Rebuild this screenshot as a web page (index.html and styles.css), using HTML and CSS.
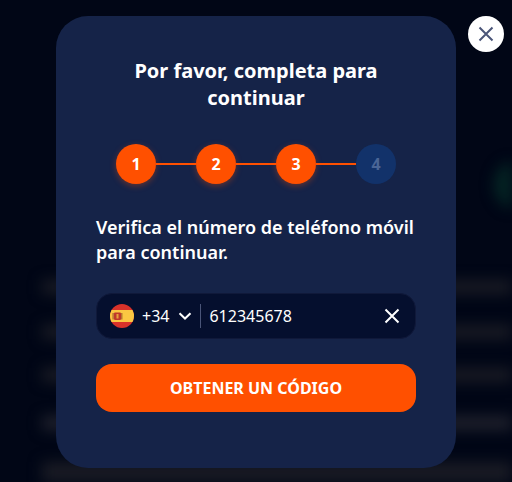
FILE: index.html
```html
<!DOCTYPE html>
<html lang="es">
<head>
    <meta charset="UTF-8">
    <title>Verificación</title>
    <link rel="stylesheet" href="styles.css">
</head>
<body>
    <!-- fondo borroso -->
    <div class="backdrop">
        <div class="glow"></div>
        <div class="blur-row row-1"></div>
        <div class="blur-row row-2"></div>
        <div class="blur-row row-3"></div>
        <div class="blur-row row-4"></div>
        <div class="blur-row row-5"></div>
    </div>

    <div class="overlay">
        <div class="modal">
            <h1 class="title">Por favor, completa para continuar</h1>

            <div class="steps">
                <div class="step">1</div>
                <div class="step-line"></div>
                <div class="step">2</div>
                <div class="step-line"></div>
                <div class="step">3</div>
                <div class="step-line"></div>
                <div class="step step-off">4</div>
            </div>

            <p class="text">Verifica el número de teléfono móvil para continuar.</p>

            <div class="phone">
                <svg class="flag" width="24" height="24" viewBox="0 0 24 24">
                    <defs><clipPath id="flagClip"><circle cx="12" cy="12" r="12"/></clipPath></defs>
                    <g clip-path="url(#flagClip)">
                        <rect width="24" height="24" fill="#d8322a"/>
                        <rect y="6" width="24" height="12" fill="#fbc742"/>
                        <rect x="4" y="8.5" width="7" height="7.5" rx="1" fill="#c0392b"/>
                        <rect x="6.5" y="10" width="2" height="4.5" fill="#e9a23b"/>
                        <rect x="2.5" y="9" width="1.2" height="6.5" fill="#a8612c"/>
                        <rect x="11.2" y="9" width="1.2" height="6.5" fill="#a8612c"/>
                    </g>
                </svg>
                <span class="prefix">+34</span>
                <svg class="chevron" width="14" height="8" viewBox="0 0 14 8">
                    <path d="M1.5 1.2 7 6.5l5.5-5.3" fill="none" stroke="#fff" stroke-width="2"/>
                </svg>
                <span class="divider"></span>
                <span class="number">612345678</span>
                <svg class="clear" width="16" height="16" viewBox="0 0 16 16">
                    <path d="M1.5 1.5l13 13M14.5 1.5l-13 13" fill="none" stroke="#fff" stroke-width="2"/>
                </svg>
            </div>

            <button class="submit">OBTENER UN CÓDIGO</button>
        </div>

        <button class="close" aria-label="Cerrar">
            <svg width="16" height="16" viewBox="0 0 16 16">
                <path d="M1.5 1.5l13 13M14.5 1.5l-13 13" fill="none" stroke="#4a5578" stroke-width="2"/>
            </svg>
        </button>
    </div>
</body>
</html>
```

FILE: styles.css
```css
* {
    box-sizing: border-box;
}

html, body {
    margin: 0;
    height: 100%;
}

body {
    font-family: "Noto Sans", Arial, sans-serif;
    background-color: #010616;
    overflow: hidden;
}

.backdrop {
    position: absolute;
    inset: 0;
    overflow: hidden;
    filter: blur(7px);
}

.glow {
    position: absolute;
    left: 494px;
    top: 160px;
    width: 50px;
    height: 50px;
    border-radius: 50%;
    background-color: #042524;
}

.blur-row {
    position: absolute;
    left: 42px;
    right: 0;
    height: 14px;
    background-color: #191b24;
}

.row-1 { top: 280px; }
.row-2 { top: 325px; }
.row-3 { top: 368px; }
.row-4 { top: 416px; background-color: #1f212c; }
.row-5 { top: 462px; height: 20px; }

.overlay {
    position: relative;
    height: 100%;
    padding-top: 16px;
    display: flex;
    justify-content: center;
    align-items: flex-start;
}

.modal {
    width: 400px;
    height: 452px;
    padding: 41px 40px 40px;
    background-color: #152348;
    border-radius: 32px;
}

.title {
    margin: 0 30px;
    font-size: 20px;
    line-height: 27px;
    font-weight: 700;
    color: #fff;
    text-align: center;
}

.steps {
    margin-top: 33px;
    padding: 0 20px;
    display: flex;
    align-items: center;
}

.step {
    width: 40px;
    height: 40px;
    flex: none;
    border-radius: 50%;
    background-color: #ff5000;
    box-shadow: 0 2px 6px rgba(255, 80, 0, 0.35);
    color: #fff;
    font-size: 16px;
    font-weight: 700;
    display: flex;
    justify-content: center;
    align-items: center;
}

.step-off {
    background-color: #12326a;
    box-shadow: none;
    color: #4a6596;
}

.step-line {
    flex: 1;
    height: 2px;
    background-color: #ff5000;
}

.text {
    margin: 31px 0 0;
    font-size: 18px;
    line-height: 25px;
    font-weight: 600;
    color: #fff;
}

.phone {
    margin-top: 28px;
    height: 46px;
    padding: 0 15px 0 13px;
    background-color: #050f2e;
    border: 1px solid #10193a;
    border-radius: 16px;
    display: flex;
    align-items: center;
    color: #fff;
    font-size: 16px;
}

.prefix {
    margin-left: 8px;
}

.chevron {
    margin-left: 9px;
}

.divider {
    width: 1px;
    height: 24px;
    margin: 0 8px;
    background-color: #4a5578;
}

.number {
    flex: 1;
}

.submit {
    display: block;
    width: 100%;
    height: 48px;
    margin-top: 25px;
    border: none;
    border-radius: 16px;
    background-color: #ff5000;
    color: #fff;
    font-family: inherit;
    font-size: 16px;
    font-weight: 700;
    cursor: pointer;
}

.close {
    position: absolute;
    left: 468px;
    top: 16px;
    width: 36px;
    height: 36px;
    padding: 0;
    border: none;
    border-radius: 50%;
    background-color: #fff;
    display: flex;
    justify-content: center;
    align-items: center;
    cursor: pointer;
}
```
